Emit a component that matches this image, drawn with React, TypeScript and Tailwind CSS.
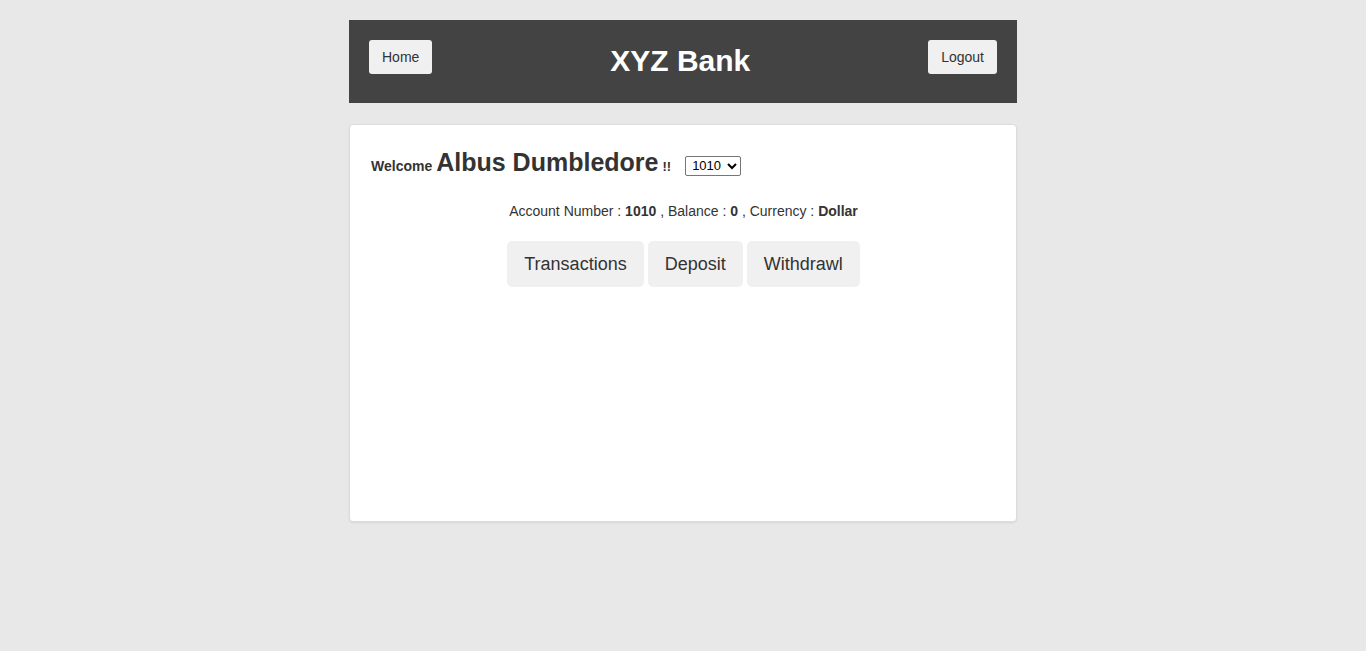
import { useState } from "react";

const accounts = [
  { number: "1010", balance: 0, currency: "Dollar" },
  { number: "1011", balance: 0, currency: "Rupee" },
];

export default function App() {
  const [selected, setSelected] = useState("1010");
  const account = accounts.find((a) => a.number === selected) ?? accounts[0];

  return (
    <div className="min-h-[651px] bg-[#e8e8e8] pt-5 font-['Liberation_Sans',Arial,sans-serif] text-[#333]">
      <div className="mx-auto w-[668px]">
        <div className="flex h-[83px] items-start justify-between bg-[#434343] px-5 pt-5">
          <button className="h-[34px] rounded-[3px] bg-[#f0f0f0] px-[13px] text-sm text-[#333]">Home</button>
          <h1 className="mt-[4px] text-[30px] font-bold leading-[34px] text-white">XYZ Bank</h1>
          <button className="h-[34px] rounded-[3px] bg-[#f0f0f0] px-[13px] text-sm text-[#333]">Logout</button>
        </div>

        <div className="mt-[21px] h-[398px] rounded-[4px] border border-[#dcdcdc] bg-white pl-[21px] pr-5 pt-[21px] shadow-[0_1px_2px_rgba(0,0,0,0.08)]">
          <div className="flex items-baseline">
            <span className="text-[14px] font-bold">Welcome</span>
            <span className="ml-[4px] text-[25px] font-bold leading-[32px]">Albus Dumbledore</span>
            <span className="ml-[4px] text-[13px] font-bold">!!</span>
            <select
              value={selected}
              onChange={(e) => setSelected(e.target.value)}
              className="relative -top-px ml-[14px] h-[20px] w-[56px] rounded-[2px] border border-[#767676] bg-white pl-[2px] text-[13px] text-black"
            >
              {accounts.map((a) => (
                <option key={a.number} value={a.number}>{a.number}</option>
              ))}
            </select>
          </div>

          <p className="mt-[23px] text-center text-sm">
            Account Number : <b>{account.number}</b> , Balance : <b>{account.balance}</b> , Currency : <b>{account.currency}</b>
          </p>

          <div className="mt-[20px] flex justify-center gap-1">
            <button className="h-[46px] rounded-[5px] bg-[#f0f0f0] px-[17px] text-lg text-[#333]">Transactions</button>
            <button className="h-[46px] rounded-[5px] bg-[#f0f0f0] px-[17px] text-lg text-[#333]">Deposit</button>
            <button className="h-[46px] rounded-[5px] bg-[#f0f0f0] px-[17px] text-lg text-[#333]">Withdrawl</button>
          </div>
        </div>
      </div>
    </div>
  );
}
